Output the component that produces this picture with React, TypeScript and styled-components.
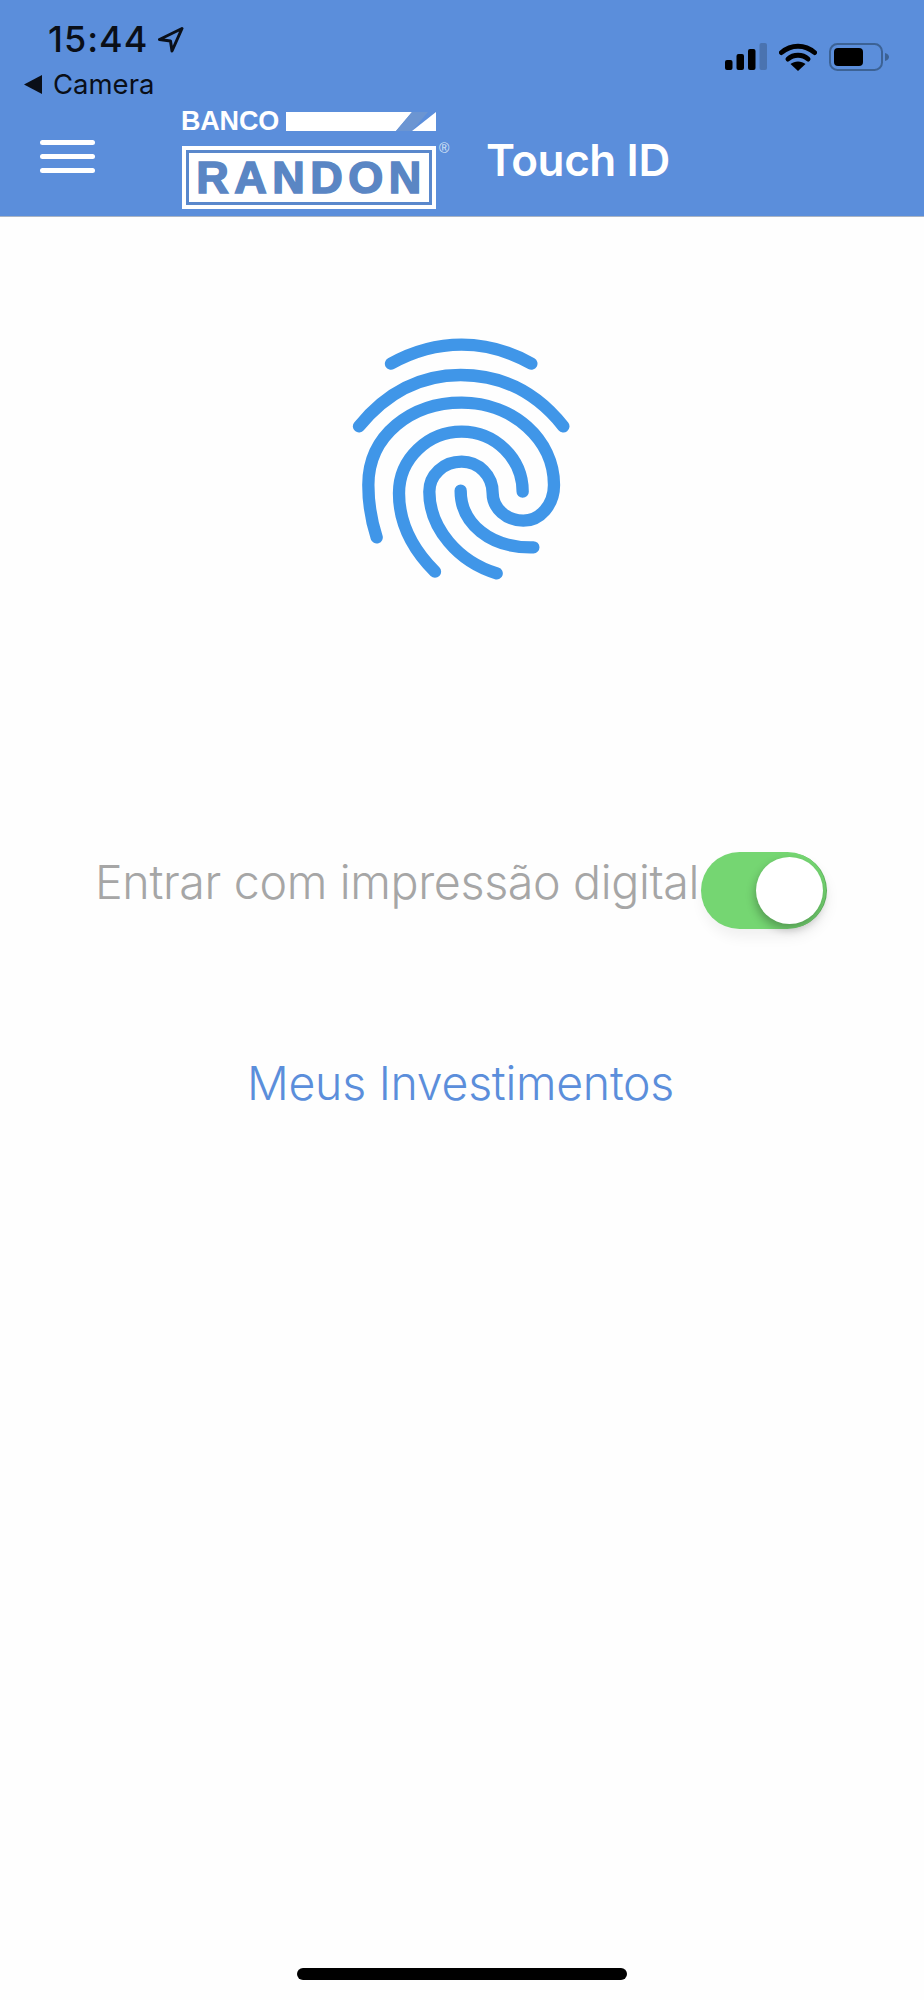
import React from "react";
import styled, { createGlobalStyle } from "styled-components";

const Global = createGlobalStyle`
  html, body { margin: 0; padding: 0; background: #fefefe; }
  body { font-family: Inter, "Liberation Sans", sans-serif; }
`;

const Screen = styled.div`
  width: 924px;
  height: 2000px;
  display: flex;
  flex-direction: column;
  background: #fefefe;
  overflow: hidden;
`;

const Header = styled.header`
  height: 217px;
  box-sizing: border-box;
  background: #5b8edb;
  border-bottom: 1px solid #a9b4c4;
  display: flex;
  flex-direction: column;
  flex: none;
`;

const StatusBar = styled.div`
  height: 111px;
  flex: none;
  display: flex;
  justify-content: space-between;
`;

const StatusLeft = styled.div`
  display: flex;
  flex-direction: column;
  padding: 21px 0 0 24px;
`;

const TimeRow = styled.div`
  display: flex;
  align-items: center;
  gap: 10px;
  padding-left: 24px;
`;

const Time = styled.span`
  font-size: 36px;
  line-height: 37px;
  font-weight: 500;
  letter-spacing: 1px;
  color: #0a0f18;
`;

const BackRow = styled.div`
  display: flex;
  align-items: center;
  gap: 11px;
  margin-top: 11px;
`;

const BackLabel = styled.span`
  font-size: 27.5px;
  line-height: 30px;
  color: #0a0f18;
`;

const StatusRight = styled.div`
  display: flex;
  align-items: flex-start;
  gap: 12px;
  padding: 43px 35px 0 0;
`;

const Nav = styled.div`
  display: flex;
  align-items: flex-start;
`;

const Burger = styled.div`
  width: 55px;
  margin: 29px 0 0 40px;
  display: flex;
  flex-direction: column;
  gap: 9px;
`;

const BurgerBar = styled.span`
  display: block;
  height: 5px;
  border-radius: 3px;
  background: #fff;
`;

const Logo = styled.div`
  position: relative;
  width: 254px;
  margin-left: 87px;
  display: flex;
  flex-direction: column;
  gap: 15px;
`;

const LogoTop = styled.div`
  display: flex;
  align-items: center;
  justify-content: space-between;
  height: 20px;
`;

const Banco = styled.span`
  font-family: "Liberation Sans", Arial, sans-serif;
  font-weight: 700;
  font-size: 27px;
  line-height: 20px;
  letter-spacing: -0.2px;
  margin-left: -1px;
  color: #fff;
`;

const LogoBox = styled.div`
  height: 63px;
  box-sizing: border-box;
  background: #fff;
  padding: 4px;
`;

const LogoInner = styled.div`
  height: 100%;
  box-sizing: border-box;
  border: 3px solid #5a88cc;
  display: flex;
  align-items: center;
  justify-content: center;
`;

const Randon = styled.span`
  font-family: "Liberation Sans", Arial, sans-serif;
  font-weight: 700;
  font-size: 45px;
  line-height: 44px;
  letter-spacing: 5.5px;
  margin-right: -5px;
  color: #5a86c4;
  -webkit-text-stroke: 1.6px #5a86c4;
`;

const Registered = styled.span`
  position: absolute;
  left: 257px;
  top: 29px;
  font-family: "Liberation Sans", Arial, sans-serif;
  font-size: 14px;
  line-height: 16px;
  color: #dbe6f6;
`;

const Title = styled.h1`
  margin: 27px 0 0 50px;
  font-size: 44px;
  line-height: 44px;
  font-weight: 600;
  letter-spacing: -0.4px;
  color: #fff;
`;

const Body = styled.main`
  flex: 1;
  display: flex;
  flex-direction: column;
  align-items: center;
  position: relative;
`;

const Fingerprint = styled.svg`
  width: 260px;
  height: 260px;
  margin: 103px 4px 0 0;
  display: block;
`;

const ToggleRow = styled.div`
  width: 924px;
  box-sizing: border-box;
  margin-top: 272px;
  padding-left: 95px;
  display: flex;
  align-items: center;
  gap: 2px;
`;

const ToggleLabel = styled.span`
  font-size: 46.6px;
  line-height: 54px;
  font-weight: 350;
  letter-spacing: -0.36px;
  margin-bottom: 18px;
  white-space: nowrap;
  color: #a6a6a6;
`;

const Toggle = styled.div`
  position: relative;
  width: 125px;
  height: 77px;
  flex: none;
  border-radius: 39px;
  background: #75d672;
  box-shadow: 2px 0 0 -1px #5eb45c, 2px 8px 14px rgba(0, 0, 0, 0.06);
`;

const Thumb = styled.span`
  position: absolute;
  right: 3px;
  top: 5px;
  width: 67px;
  height: 67px;
  border-radius: 50%;
  background: #fff;
  box-shadow: -1px 5px 10px rgba(0, 0, 0, 0.28);
`;

const InvestLink = styled.a`
  margin-top: 127px;
  margin-right: 3px;
  font-size: 46.4px;
  line-height: 54px;
  font-weight: 350;
  letter-spacing: -0.25px;
  color: #5b8edb;
`;

const HomeBar = styled.div`
  position: absolute;
  left: 297px;
  top: 1751px;
  width: 330px;
  height: 12px;
  border-radius: 6px;
  background: #000;
`;

const App = () => (
  <Screen>
    <Global />
    <Header>
      <StatusBar>
        <StatusLeft>
          <TimeRow>
            <Time>15:44</Time>
            <svg width="26" height="26" viewBox="0 0 26 26">
              <path d="M24 1.5 L1.5 12.5 L12.5 14 L14 24 Z" fill="none" stroke="#0a0f18" strokeWidth="3" strokeLinejoin="round" />
            </svg>
          </TimeRow>
          <BackRow>
            <svg width="18" height="19" viewBox="0 0 18 19">
              <path d="M18 0 V19 L0 9.5 Z" fill="#0a0f18" />
            </svg>
            <BackLabel>Camera</BackLabel>
          </BackRow>
        </StatusLeft>
        <StatusRight>
          <svg width="42" height="28" viewBox="0 0 42 28">
            <rect x="0" y="17" width="7.5" height="10" rx="2" fill="#000" />
            <rect x="11.5" y="11" width="7.5" height="16" rx="2" fill="#000" />
            <rect x="23" y="6" width="7.5" height="21" rx="2" fill="#000" />
            <rect x="34.5" y="0" width="7.5" height="27" rx="2" fill="#4a73b0" />
          </svg>
          <svg width="38" height="28" viewBox="0 0 38 28">
            <path d="M2.5 9.5 C12 1 26 1 35.5 9.5" fill="none" stroke="#000" strokeWidth="5" strokeLinecap="round" />
            <path d="M9 16 C14.5 11 23.5 11 29 16" fill="none" stroke="#000" strokeWidth="5" strokeLinecap="round" />
            <path d="M19 28 L11.5 21 C15.5 17.5 22.5 17.5 26.5 21 Z" fill="#000" />
          </svg>
          <svg width="60" height="28" viewBox="0 0 60 28">
            <rect x="1" y="1" width="52" height="26" rx="7.5" fill="none" stroke="#3c6295" strokeWidth="2" />
            <rect x="5" y="5" width="29" height="18" rx="4" fill="#000" />
            <path d="M56 10 C59 11 60 12.5 60 14 C60 15.5 59 17 56 18 Z" fill="#3c6295" />
          </svg>
        </StatusRight>
      </StatusBar>
      <Nav>
        <Burger>
          <BurgerBar />
          <BurgerBar />
          <BurgerBar />
        </Burger>
        <Logo>
          <LogoTop>
            <Banco>BANCO</Banco>
            <svg width="150" height="19" viewBox="0 0 150 19">
              <path d="M0 0 H126 L110 19 H0 Z" fill="#fff" />
              <path d="M126 0 H142 L126 19 H110 Z" fill="#6b95d2" />
              <path d="M150 0 V19 H126 Z" fill="#fff" />
            </svg>
          </LogoTop>
          <LogoBox>
            <LogoInner>
              <Randon>RANDON</Randon>
            </LogoInner>
          </LogoBox>
          <Registered>®</Registered>
        </Logo>
        <Title>Touch ID</Title>
      </Nav>
    </Header>
    <Body>
      <Fingerprint viewBox="0 0 780 780" fill="none" stroke="#4096e8" strokeWidth="37" strokeLinecap="round">
        <path d="M183 131 C320 55 470 55 604 131" />
        <path d="M87 319 C180 205 285 165 392 165 C505 165 610 205 700 319" />
        <path d="M140 652 C120 590 115 540 115 495 C115 345 245 248 395 248 C550 248 672 360 672 495 C672 555 630 602 580 602 C530 602 488 565 488 520 C488 465 445 425 395 425 C340 425 298 465 298 515 C298 625 385 725 500 760" />
        <path d="M315 755 C250 690 207 610 207 520 C207 415 295 335 395 335 C495 335 578 415 578 515" />
        <path d="M392 512 C392 610 480 685 610 682" />
      </Fingerprint>
      <ToggleRow>
        <ToggleLabel>Entrar com impressão digital</ToggleLabel>
        <Toggle>
          <Thumb />
        </Toggle>
      </ToggleRow>
      <InvestLink>Meus Investimentos</InvestLink>
      <HomeBar />
    </Body>
  </Screen>
);

export default App;
